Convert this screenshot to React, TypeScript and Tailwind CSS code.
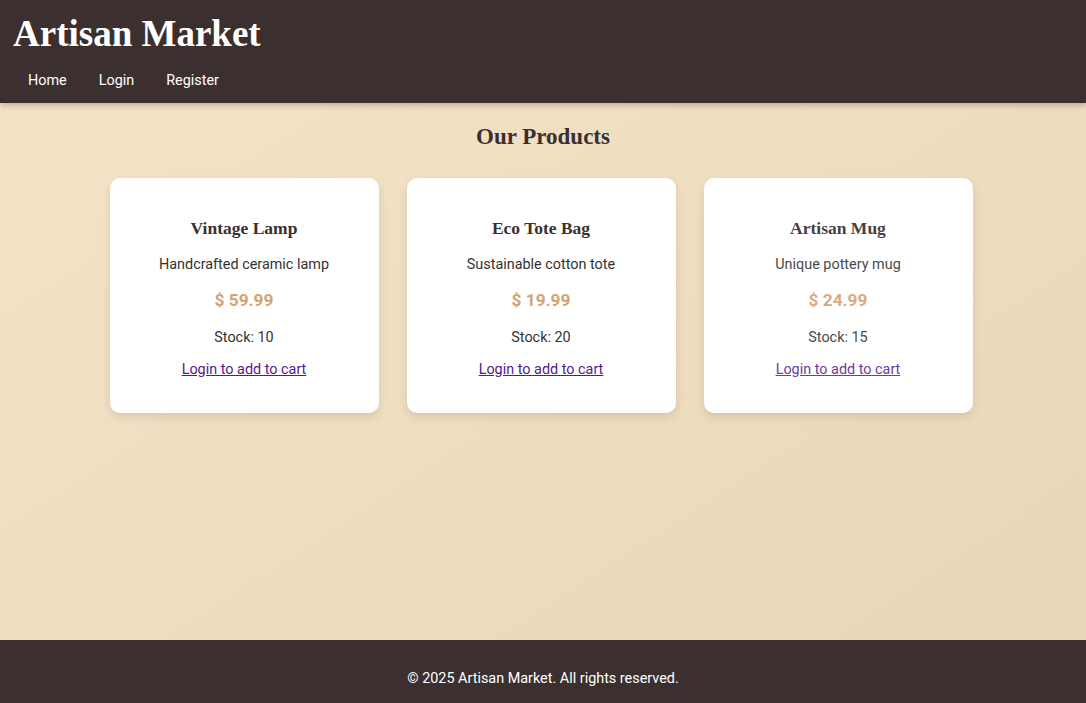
import React from 'react';

const products = [
  { name: 'Vintage Lamp', desc: 'Handcrafted ceramic lamp', price: '59.99', stock: 10 },
  { name: 'Eco Tote Bag', desc: 'Sustainable cotton tote', price: '19.99', stock: 20 },
  { name: 'Artisan Mug', desc: 'Unique pottery mug', price: '24.99', stock: 15 },
];

const serif = "font-['Liberation_Serif','DejaVu_Serif',serif]";

export default function App() {
  return (
    <div className="min-h-[703px] flex flex-col font-['Roboto','Liberation_Sans',sans-serif] bg-gradient-to-br from-[#f5e4c8] to-[#e9d6b8]">
      <header className="h-[103px] bg-[#3b2f2f] px-3 pt-[9px] shadow-[0_2px_6px_rgba(0,0,0,0.25)] relative z-10">
        <h1 className={`${serif} text-[37px] leading-[50px] font-bold text-white pl-[1px]`}>Artisan Market</h1>
        <nav className="flex mt-[5px] text-[14.4px] text-white">
          <a className="px-4 py-[6px]">Home</a>
          <a className="px-4 py-[6px]">Login</a>
          <a className="px-4 py-[6px]">Register</a>
        </nav>
      </header>

      <main className="flex-1 flex flex-col items-center pt-[17px]">
        <h2 className={`${serif} text-[23px] leading-[34px] font-bold text-[#3b2f2f]`}>Our Products</h2>
        <div className="grid grid-cols-[269px_269px_269px] gap-[28px] mt-[24px] ml-[-4px]">
          {products.map((p, i) => {
            const faded = i === 2;
            return (
              <div
                key={p.name}
                className="bg-white rounded-[10px] h-[235px] flex flex-col items-center pt-[37px] shadow-[0_4px_10px_rgba(0,0,0,0.1)]"
              >
                <h3 className={`${serif} text-[17.5px] leading-[27px] font-bold ${faded ? 'text-[#4a3f3f]' : 'text-[#3b2f2f]'}`}>{p.name}</h3>
                <p className={`text-[14.4px] leading-[22px] mt-[12px] ${faded ? 'text-[#4a4a4a]' : 'text-[#333]'}`}>{p.desc}</p>
                <p className={`text-[17.3px] leading-[27px] font-bold mt-[11px] ${faded ? 'text-[#d9ab80]' : 'text-[#d4a373]'}`}>$ {p.price}</p>
                <p className={`text-[14.4px] leading-[22px] mt-[13px] ${faded ? 'text-[#4a4a4a]' : 'text-[#333]'}`}>Stock: {p.stock}</p>
                <a className={`text-[14.4px] leading-[22px] underline mt-[10px] cursor-pointer ${faded ? 'text-[#6f3d9c]' : 'text-[#551a8b]'}`}>Login to add to cart</a>
              </div>
            );
          })}
        </div>
      </main>

      <footer className="h-[63px] bg-[#3b2f2f] flex items-center justify-center pt-[15px] text-[14.4px] text-white">
        © 2025 Artisan Market. All rights reserved.
      </footer>
    </div>
  );
}
